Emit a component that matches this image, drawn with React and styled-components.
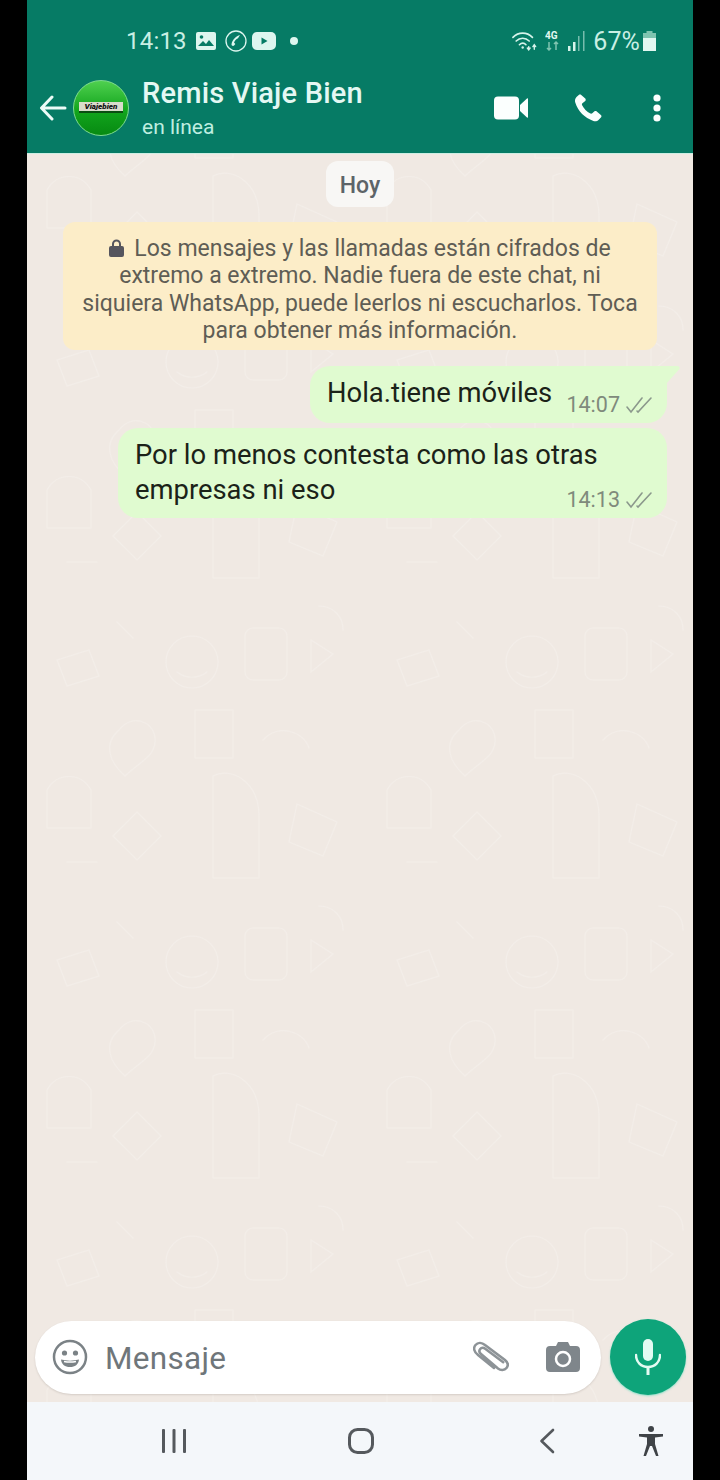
import React from 'react'
import styled, { createGlobalStyle } from 'styled-components'

const Global = createGlobalStyle`
	html, body {
		margin: 0;
		padding: 0;
		background: #000;
		font-family: Roboto, "Liberation Sans", sans-serif;
	}
`

const doodles = encodeURIComponent(`<svg xmlns="http://www.w3.org/2000/svg" width="340" height="300" fill="none" stroke="#f6f2ee" stroke-opacity="0.5" stroke-width="1.200" stroke-linecap="round"><circle cx="165" cy="62" r="26"/><path d="M150 72c9 7 21 7 30 0"/><rect x="218" y="28" width="42" height="52" rx="8"/><path d="M284 40l22 14-22 18zM30 60l32-10 10 26-32 10zM92 130c12-16 34-10 36 8s-16 24-30 38c-16-14-22-32-6-46zM168 110h38v48h-38zM236 140c14-16 40-10 46 8M20 190c10-18 34-18 44 0v38H20zM110 212l24 24-24 24-24-24zM186 176c18-10 46 6 46 40v62h-46zM270 204l40 18-14 34-34-14zM40 262h30M292 6c14 0 24 10 24 24M90 22l16 16"/></svg>`)

const Screen = styled.div`
	display: flex;
	flex-direction: column;
	width: 666px;
	height: 1480px;
	margin-left: 27px;
	overflow: hidden;
	background: #f0e9e3 url("data:image/svg+xml,${doodles}");
`

const Header = styled.header`
	height: 153px;
	flex: none;
	background: #067b65;
	border-bottom: 1px solid #cdeee3;
	box-sizing: content-box;
	color: #dff7f0;
`

const StatusBar = styled.div`
	display: flex;
	align-items: center;
	justify-content: space-between;
	height: 34px;
	padding: 24px 37px 0 99px;
`

const StatusGroup = styled.div`
	display: flex;
	align-items: center;
	gap: ${(p) => p.$gap || 8}px;
`

const Clock = styled.span`
	font-size: 24px;
	letter-spacing: 0.2px;
	color: #c9efe4;
`

const Battery = styled.span`
	font-size: 25px;
	letter-spacing: 0.1px;
	color: #c9efe4;
`

// drawings that sit a little off the gap of their row
const Glyph = styled.svg`
	flex: none;
	margin-left: ${(p) => p.$left || 0}px;
	margin-right: ${(p) => p.$right || 0}px;
`

const TitleBar = styled.div`
	display: flex;
	align-items: center;
	height: 85px;
	padding: 7px 0 0 12px;
`

const Avatar = styled.div`
	display: flex;
	align-items: center;
	justify-content: center;
	width: 54px;
	height: 54px;
	margin-left: 6px;
	border-radius: 50%;
	border: 1px solid #7fdc8e;
	background: linear-gradient(#4fd04f, #12a51d 55%, #078a12);
`

const AvatarLabel = styled.span`
	display: block;
	width: 44px;
	background: #d9dccb;
	color: #111;
	font-size: 8px;
	line-height: 9px;
	font-weight: 900;
	font-style: italic;
	text-align: center;
	border-bottom: 2px solid #0b4d12;
	white-space: nowrap;
`

const TitleText = styled.div`
	margin-left: 13px;
	flex: 1;
`

const Name = styled.div`
	font-size: 29px;
	line-height: 36px;
	margin-top: -1px;
	font-weight: 500;
	letter-spacing: 0.2px;
	color: #e4f8f3;
`

const Presence = styled.div`
	font-size: 21px;
	line-height: 26px;
	margin-top: 3px;
	color: #bfeee0;
`

const Actions = styled.div`
	display: flex;
	align-items: center;
	gap: 45px;
	padding-right: 31px;
`

const Chat = styled.main`
	flex: 1;
	display: flex;
	flex-direction: column;
	padding: 7px 26px 7px 8px;
	min-height: 0;
`

const DateChip = styled.div`
	align-self: center;
	margin-left: 18px;
	padding: 0 14px;
	height: 46px;
	line-height: 50px;
	border-radius: 12px;
	background: #f8f7f5;
	color: #5d6468;
	font-size: 23px;
	font-weight: 500;
`

const Notice = styled.div`
	align-self: center;
	box-sizing: border-box;
	width: 594px;
	height: 128px;
	margin: 15px 0 16px 18px;
	padding: 13px 10px 0;
	border-radius: 12px;
	background: #fcedc8;
	color: #5f5d55;
	font-size: 23px;
	line-height: 27.3px;
	text-align: center;
`

const Lock = styled.svg`
	width: 15px;
	height: 18px;
	margin-right: 10px;
	vertical-align: -1px;
`

const Bubble = styled.div`
	position: relative;
	align-self: flex-end;
	box-sizing: border-box;
	width: ${(p) => p.$width}px;
	height: ${(p) => p.$height}px;
	margin-top: ${(p) => p.$top}px;
	padding: 10px 17px 0;
	border-radius: ${(p) => (p.$tail ? '20px 0 20px 20px' : '20px')};
	background: #e0fbd0;
	color: #1b2218;
	font-size: 27.4px;
	line-height: 35px;
`

const Tail = styled.svg`
	position: absolute;
	top: 0;
	right: -13px;
	width: 14px;
	height: 18px;
`

const Meta = styled.div`
	position: absolute;
	right: 14px;
	bottom: 6px;
	display: flex;
	align-items: center;
	gap: 5px;
	font-size: 21.5px;
	line-height: 24px;
	color: #7f8a7c;
`

const Composer = styled.div`
	flex: none;
	display: flex;
	align-items: center;
	gap: 9px;
	height: 76px;
	margin-top: auto;
	margin-right: -19px;
`

const InputBox = styled.div`
	display: flex;
	align-items: center;
	box-sizing: border-box;
	width: 566px;
	height: 73px;
	padding: 0 20px 0 17px;
	border-radius: 37px;
	background: #fff;
	box-shadow: 0 1px 2px rgba(90, 80, 70, 0.18);
`

const Placeholder = styled.span`
	flex: 1;
	margin: 3px 0 0 17px;
	font-size: 31.5px;
	letter-spacing: 0.3px;
	color: #6f767a;
`

const Mic = styled.div`
	display: flex;
	align-items: center;
	justify-content: center;
	width: 76px;
	height: 76px;
	border-radius: 50%;
	background: #0ea47a;
	box-shadow: 0 1px 2px rgba(100, 220, 190, 0.7);
`

const NavBar = styled.nav`
	flex: none;
	display: flex;
	align-items: center;
	height: 78px;
	padding-left: 127px;
	background: #f4f7fa;
	box-sizing: border-box;
`

const NavCell = styled.div`
	display: flex;
	justify-content: center;
	width: 40px;
	margin-left: ${(p) => p.$left || 0}px;
`

const Checks = () => (
	<svg width="28" height="18" viewBox="0 0 28 18" fill="none" stroke="#8b988c" strokeWidth="1.6" strokeLinecap="round">
		<path d="M2 11l4 5L17 2" />
		<path d="M12 15l1 1L26 2" />
	</svg>
)

const Wifi = () => (
	<svg width="26" height="22" viewBox="0 0 28 22" fill="none" stroke="#d6f3ea" strokeWidth="1.8" strokeLinecap="round">
		<path d="M1 7c6-6 15-6 21 0" />
		<path d="M4.5 11c4-4 10-4 14 0" />
		<path d="M8 15c2.300-2.400 5-2.400 7 0" />
		<circle cx="11.500" cy="18" r="1.300" fill="#d6f3ea" stroke="none" />
		<path d="M18 17v3M16.500 18.500l1.500 2 1.500-2M24 20v-5M22.500 17l1.500-2 1.500 2" strokeWidth="1.500" />
	</svg>
)

const Signal = () => (
	<svg width="18" height="20" viewBox="0 0 18 20" fill="#d6f3ea">
		<rect x="0" y="15" width="2.500" height="5" />
		<rect x="5" y="11" width="2.500" height="9" />
		<rect x="10" y="5" width="1.500" height="15" opacity="0.55" />
		<rect x="15" y="0" width="1.500" height="20" opacity="0.55" />
	</svg>
)

export default function App() {
	return (
		<>
			<Global />
			<Screen>
				<Header>
					<StatusBar>
						<StatusGroup $gap={9}>
							<Clock>14:13</Clock>
							<svg width="20" height="18" viewBox="0 0 20 18">
								<rect width="20" height="18" rx="2" fill="#ddf6ef" />
								<circle cx="5.500" cy="5" r="1.800" fill="#067b65" />
								<path d="M2 14l5-5 3 3 3-4 5 6z" fill="#067b65" />
							</svg>
							<svg width="22" height="22" viewBox="0 0 22 22" fill="none" stroke="#ddf6ef" strokeWidth="1.300">
								<circle cx="11" cy="11" r="10" />
								<path d="M15 5c-4 1-8 5-8.500 9.500 0 1.200 1.700 2 2.800.8l1-1.300-1.300-1.500c.8-2 2-3.300 4-4.300z" fill="#ddf6ef" stroke="none" />
							</svg>
							<Glyph width="24" height="18" viewBox="0 0 24 18" $left={-4}>
								<rect width="24" height="18" rx="5" fill="#ddf6ef" />
								<path d="M9.500 5.500v7l6-3.500z" fill="#067b65" />
							</Glyph>
							<Glyph width="8" height="8" viewBox="0 0 8 8" $left={5}>
								<circle cx="4" cy="4" r="4" fill="#ddf6ef" />
							</Glyph>
						</StatusGroup>
						<StatusGroup $gap={7}>
							<Wifi />
							<svg width="16" height="22" viewBox="0 0 16 22" fontFamily="Roboto">
								<text x="0" y="9" fontSize="10" fontWeight="700" fill="#e2f7f1">4G</text>
								<path d="M4 12v8M2 18l2 2 2-2M11 20v-8M9 14l2-2 2 2" fill="none" stroke="#7fc4b0" strokeWidth="1.500" />
							</svg>
							<Signal />
							<Battery>67%</Battery>
							<Glyph width="13" height="20" viewBox="0 0 13 20" $left={-4}>
								<rect x="3.500" y="0" width="6" height="2.500" fill="#7fc4b0" />
								<rect x="0" y="2" width="13" height="5" fill="#7fc4b0" />
								<rect x="0" y="7" width="13" height="13" fill="#e2f7f1" />
							</Glyph>
						</StatusGroup>
					</StatusBar>
					<TitleBar>
						<svg width="28" height="26" viewBox="0 0 28 26" fill="none" stroke="#ecfbf7" strokeWidth="3" strokeLinecap="round" strokeLinejoin="round">
							<path d="M26 13H3M13 2L2.500 13 13 24" />
						</svg>
						<Avatar>
							<AvatarLabel>Viajebien</AvatarLabel>
						</Avatar>
						<TitleText>
							<Name>Remis Viaje Bien</Name>
							<Presence>en línea</Presence>
						</TitleText>
						<Actions>
							<svg width="34" height="24" viewBox="0 0 34 24" fill="#fbfffe">
								<rect width="25" height="23" y="0.500" rx="4" />
								<path d="M26 9l7-6.500c.5-.4 1-.2 1 .5v18c0 .7-.5.9-1 .5L26 15z" />
							</svg>
							<svg width="30" height="30" viewBox="0 0 24 24" fill="#fbfffe">
								<path d="M6.600 1.500c-.6-.5-1.400-.5-2 0L2.800 3.200C1.700 4.400 1.300 6 1.800 7.600c2.300 7 7.500 12.400 14.500 14.700 1.500.5 3.200.1 4.300-1l1.700-1.700c.6-.6.6-1.500 0-2.100l-3.300-2.800c-.6-.5-1.400-.5-2 0l-1.600 1.500c-.4.4-1 .4-1.500.2-2.900-1.400-5.300-3.900-6.700-6.800-.2-.5-.1-1 .3-1.400L9.800 6.400c.5-.6.5-1.400 0-2z" />
							</svg>
							<Glyph width="10" height="28" viewBox="0 0 10 28" fill="#fbfffe" $left={4}>
								<circle cx="5" cy="4" r="3.600" />
								<circle cx="5" cy="14" r="3.600" />
								<circle cx="5" cy="24" r="3.600" />
							</Glyph>
						</Actions>
					</TitleBar>
				</Header>
				<Chat>
					<DateChip>Hoy</DateChip>
					<Notice>
						<Lock viewBox="0 0 15 18" fill="#55555e">
							<path d="M3 7V5a4.500 4.500 0 019 0v2h1a2 2 0 012 2v7a2 2 0 01-2 2H2a2 2 0 01-2-2V9a2 2 0 012-2zm2 0h5V5a2.500 2.500 0 00-5 0z" />
						</Lock>
						Los mensajes y las llamadas están cifrados de
						<br />
						extremo a extremo. Nadie fuera de este chat, ni
						<br />
						siquiera WhatsApp, puede leerlos ni escucharlos. Toca
						<br />
						para obtener más información.
					</Notice>
					<Bubble $width={357} $height={57} $top={0} $tail>
						Hola.tiene móviles
						<Tail viewBox="0 0 14 18" fill="#e0fbd0">
							<path d="M0 0h11c2.500 0 3.500 2 2 3.500L0 18z" />
						</Tail>
						<Meta>
							14:07 <Checks />
						</Meta>
					</Bubble>
					<Bubble $width={549} $height={90} $top={5}>
						Por lo menos contesta como las otras
						<br />
						empresas ni eso
						<Meta>
							14:13 <Checks />
						</Meta>
					</Bubble>
					<Composer>
						<InputBox>
							<svg width="36" height="36" viewBox="0 0 36 36" fill="none" stroke="#7b8286" strokeWidth="2.500">
								<circle cx="18" cy="18" r="16" />
								<circle cx="12.500" cy="14" r="2.600" fill="#7b8286" stroke="none" />
								<circle cx="23.500" cy="14" r="2.600" fill="#7b8286" stroke="none" />
								<path d="M9 20.500c6 1.500 12 1.500 18 0-.5 5-4 7.500-9 7.500s-8.500-2.500-9-7.500z" fill="#7b8286" stroke="none" />
								<path d="M12 22.500c4 .8 8 .8 12 0" stroke="#fff" strokeWidth="1.500" />
							</svg>
							<Placeholder>Mensaje</Placeholder>
							<Glyph width="36" height="32" viewBox="0 0 36 32" fill="none" stroke="#8d9397" strokeWidth="2.500" strokeLinecap="round" $right={37}>
								<path d="M21 27L5 14C1 11 0 7 2.500 4S9 1.500 12 4l20 15c3 2.500 3.500 5.500 1.500 8s-6 2.500-8.500.5L8 13c-1.800-1.500-2-3.500-.8-5s3.500-1.500 5-.3l18 13.500" />
							</Glyph>
							<Glyph width="34" height="30" viewBox="0 0 34 30" $right={1}>
								<path d="M4 4h6l2-4h10l2 4h6a4 4 0 014 4v18a4 4 0 01-4 4H4a4 4 0 01-4-4V8a4 4 0 014-4z" fill="#7f868b" />
								<circle cx="17" cy="17" r="7" fill="none" stroke="#fff" strokeWidth="2.500" />
							</Glyph>
						</InputBox>
						<Mic>
							<svg width="26" height="36" viewBox="0 0 26 36" fill="#e4fbf3">
								<rect x="8" y="0" width="10" height="22" rx="5" />
								<path d="M1 16c0 7 5 12 12 12s12-5 12-12" fill="none" stroke="#e4fbf3" strokeWidth="2.500" strokeLinecap="round" />
								<rect x="11.500" y="27" width="3" height="9" />
							</svg>
						</Mic>
					</Composer>
				</Chat>
				<NavBar>
					<NavCell>
						<svg width="24" height="24" viewBox="0 0 24 24" fill="#55595d">
							<rect x="0" width="3" height="24" rx="1" />
							<rect x="10.500" width="3" height="24" rx="1" />
							<rect x="21" width="3" height="24" rx="1" />
						</svg>
					</NavCell>
					<NavCell $left={147}>
						<svg width="26" height="26" viewBox="0 0 26 26" fill="none" stroke="#55595d" strokeWidth="3">
							<rect x="1.500" y="1.500" width="23" height="23" rx="8" />
						</svg>
					</NavCell>
					<NavCell $left={146}>
						<svg width="16" height="26" viewBox="0 0 16 26" fill="none" stroke="#55595d" strokeWidth="2.600" strokeLinecap="round" strokeLinejoin="round">
							<path d="M14 2L2.500 13 14 24" />
						</svg>
					</NavCell>
					<NavCell $left={64}>
						<svg width="24" height="30" viewBox="0 0 24 30" fill="#3f4347">
							<circle cx="12" cy="3" r="3" />
							<path d="M0 8h24v2.500l-8 1V18l3.500 12H17l-4-10h-2L7 30H4.500L8 18v-6.500l-8-1z" />
						</svg>
					</NavCell>
				</NavBar>
			</Screen>
		</>
	)
}
